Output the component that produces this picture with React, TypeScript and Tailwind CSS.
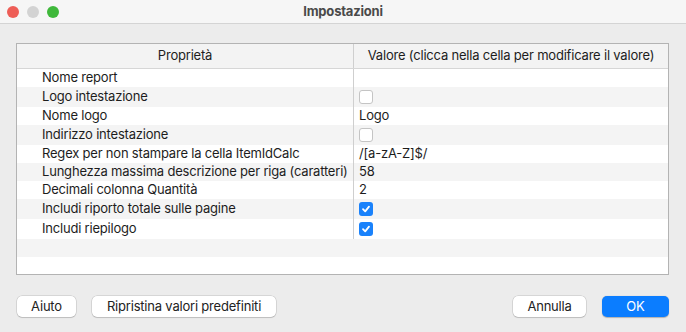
import React from "react";

interface Row {
  label: string;
  value?: string;
  check?: boolean;
}

const rows: Row[] = [
  { label: "Nome report", value: "" },
  { label: "Logo intestazione", check: false },
  { label: "Nome logo", value: "Logo" },
  { label: "Indirizzo intestazione", check: false },
  { label: "Regex per non stampare la cella ItemIdCalc", value: "/[a-zA-Z]$/" },
  { label: "Lunghezza massima descrizione per riga (caratteri)", value: "58" },
  { label: "Decimali colonna Quantità", value: "2" },
  { label: "Includi riporto totale sulle pagine", check: true },
  { label: "Includi riepilogo", check: true },
];

const Checkbox = ({ checked }: { checked: boolean }) =>
  checked ? (
    <span className="w-[14px] h-[14px] rounded-[3px] bg-[#1a82fb] flex items-center justify-center">
      <svg width="10" height="10" viewBox="0 0 10 10">
        <path d="M2 5.2 L4.2 7.4 L8 2.6" fill="none" stroke="white" strokeWidth="1.8" strokeLinecap="round" strokeLinejoin="round" />
      </svg>
    </span>
  ) : (
    <span className="w-[14px] h-[14px] rounded-[3px] bg-white border border-[#c4c4c4]" />
  );

const Button = ({ label, primary, className }: { label: string; primary?: boolean; className?: string }) => (
  <button
    className={
      "h-[21px] rounded-[5px] text-[13px] flex items-center justify-center " +
      (primary
        ? "bg-[#0b7dff] text-white shadow-[0_0.5px_1px_rgba(0,0,0,0.25)] "
        : "bg-white text-[#222] shadow-[0_0_0_0.5px_rgba(0,0,0,0.18),0_1px_1px_rgba(0,0,0,0.12)] ") +
      (className ?? "")
    }
  >
    {label}
  </button>
);

export default function App() {
  return (
    <div
      className="w-[686px] h-[332px] bg-[#ececec] flex flex-col text-[#1d1d1d] tracking-[-0.2px]"
      style={{ fontFamily: 'Inter, "Liberation Sans", Arial, sans-serif' }}
    >
      {/* title bar */}
      <div className="h-[24px] bg-[#f6f6f6] border-b border-[#d4d4d4] flex items-center relative">
        <div className="flex gap-[8px] pl-[7px]">
          <span className="w-[12px] h-[12px] rounded-full bg-[#ee5e57]" />
          <span className="w-[12px] h-[12px] rounded-full bg-[#d3d3d3]" />
          <span className="w-[12px] h-[12px] rounded-full bg-[#3fb83b]" />
        </div>
        <div className="absolute inset-0 flex items-center justify-center text-[13px] font-bold text-[#4a4a4a]">
          Impostazioni
        </div>
      </div>

      {/* table */}
      <div className="ml-[16px] mr-[17px] mt-[19px] h-[232px] border border-[#b3b3b3] bg-white flex flex-col text-[13px]">
        <div className="h-[25px] flex bg-[#f3f3f3] border-b border-[#d6d6d6] shrink-0">
          <div className="w-[337px] border-r border-[#cfcfcf] flex items-center justify-center">Proprietà</div>
          <div className="flex-1 flex items-center justify-center">Valore (clicca nella cella per modificare il valore)</div>
        </div>
        {rows.map((r, i) => (
          <div
            key={i}
            className={(i % 2 === 1 ? "bg-[#f4f4f4] " : "bg-white ") + (r.check !== undefined ? "h-[20px] " : "h-[18px] ") + "flex shrink-0"}
          >
            <div className="w-[337px] border-r border-[#cfcfcf] flex items-center pl-[25px] whitespace-nowrap">{r.label}</div>
            <div className="flex-1 flex items-center pl-[5px]">
              {r.check !== undefined ? <Checkbox checked={r.check} /> : r.value}
            </div>
          </div>
        ))}
        <div className="h-[18px] bg-[#f4f4f4] shrink-0" />
        <div className="flex-1 bg-white" />
      </div>

      {/* buttons */}
      <div className="flex items-center mt-[21px] ml-[17px] mr-[17px]">
        <Button label="Aiuto" className="w-[59px]" />
        <Button label="Ripristina valori predefiniti" className="w-[184px] ml-[16px]" />
        <div className="flex-1" />
        <Button label="Annulla" className="w-[73px]" />
        <Button label="OK" primary className="w-[67px] ml-[16px]" />
      </div>
    </div>
  );
}
